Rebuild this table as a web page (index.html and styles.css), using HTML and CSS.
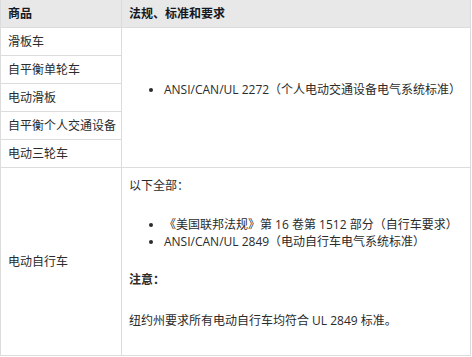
FILE: index.html
```html
<!DOCTYPE html>
<html lang="zh">
    <head>
        <meta charset="UTF-8" />
        <meta content="width=device-width, initial-scale=1.0" name="viewport" />
        <title>法规、标准和要求</title>
        <link rel="stylesheet" href="styles.css">
    </head>

    <body>
        <table class="rules">
            <colgroup>
                <col class="col-product" />
                <col />
            </colgroup>
            <thead>
                <tr>
                    <th>商品</th>
                    <th>法规、标准和要求</th>
                </tr>
            </thead>
            <tbody>
                <tr>
                    <td class="product">滑板车</td>
                    <td rowspan="5" class="middle">
                        <ul class="list list-single">
                            <li>ANSI/CAN/UL 2272（个人电动交通设备电气系统标准）</li>
                        </ul>
                    </td>
                </tr>
                <tr><td class="product">自平衡单轮车</td></tr>
                <tr><td class="product">电动滑板</td></tr>
                <tr><td class="product">自平衡个人交通设备</td></tr>
                <tr><td class="product">电动三轮车</td></tr>
                <tr>
                    <td class="product middle">电动自行车</td>
                    <td class="detail">
                        <p class="intro">以下全部：</p>
                        <ul class="list">
                            <li>《美国联邦法规》第 16 卷第 1512 部分（自行车要求）</li>
                            <li>ANSI/CAN/UL 2849（电动自行车电气系统标准）</li>
                        </ul>
                        <p class="note"><strong>注意：</strong></p>
                        <p class="last">纽约州要求所有电动自行车均符合 UL 2849 标准。</p>
                    </td>
                </tr>
            </tbody>
        </table>
    </body>
</html>
```

FILE: styles.css
```css
html {
    background-color: #ffffff;
}

body {
    margin: 0;
    color: #2b2b2b;
    font-family: "Open Sans", "Noto Sans CJK SC", sans-serif;
    font-size: 12px;
    line-height: 17px;
}

.rules {
    width: 471px;
    border-collapse: collapse;
    border: 1px solid #dcdcdc;
    border-top: none;
}
.col-product {
    width: 121px;
}
.rules th,
.rules td {
    border: 1px solid #dcdcdc;
    padding: 5px 7px;
    text-align: left;
    vertical-align: top;
}
.rules th {
    background-color: #e8e8e8;
    color: #16191f;
    font-weight: 700;
    border-top: none;
}
.rules td.product {
    white-space: nowrap;
    padding-right: 2px;
}
.rules td.middle {
    vertical-align: middle;
}
.rules td.detail {
    padding-top: 9px;
    padding-bottom: 7px;
}

.list {
    margin: 0 0 21px;
    padding-left: 35px;
}
.list-single {
    margin-bottom: 17px;
}
.intro {
    margin: 0 0 22px;
}
.note {
    margin: 0 0 24px;
}
.last {
    margin: 0 0 19px;
}
```
